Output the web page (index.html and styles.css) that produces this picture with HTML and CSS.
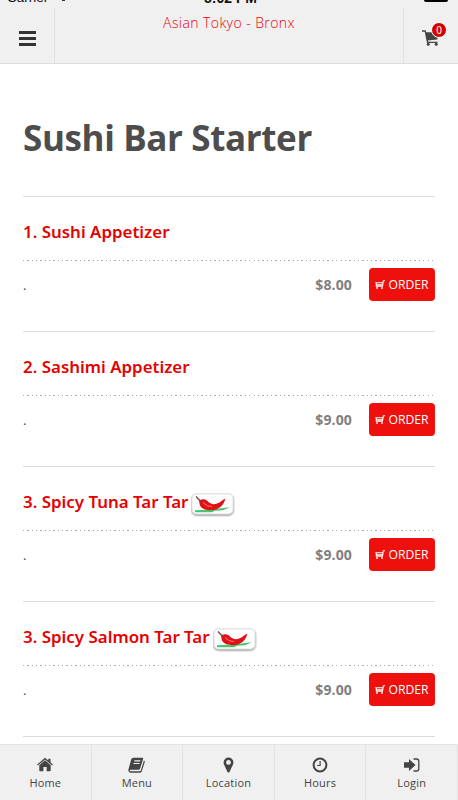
FILE: index.html
```
<!DOCTYPE html>
<html lang="en">
<head>
<meta charset="utf-8">
<title>Asian Tokyo - Bronx</title>
<link rel="stylesheet" href="styles.css">
</head>
<body>
<svg class="defs" aria-hidden="true">
  <symbol id="cart" viewBox="0 0 18 16"><path d="M0 .3h3.600l.7 1.900H17l-1.700 7.300-9.400 1 .3 1.200h9.300v1.200H5L2.700 1.700H0z"/><circle cx="6.200" cy="14.200" r="1.500"/><circle cx="14.200" cy="14.200" r="1.500"/></symbol>
  <symbol id="minicart" viewBox="0 0 10 9"><path fill="none" stroke="currentColor" stroke-width="1.100" d="M10 .8H8.300L7.500 6.300H1.300V2.700M8 2.700H.3M1.500 4.900h6"/><circle cx="2" cy="8" r=".9"/><circle cx="7" cy="8" r=".9"/></symbol>
  <symbol id="chili" viewBox="0 0 44 24">
    <rect class="chili-card" x="1" y="1" width="41" height="20" rx="4.500"/>
    <path fill="#45c56c" d="M4 17.300l13-.5 22-2.600-7 3.100-8 .5-3 1.400H4z"/>
    <path fill="#e01218" d="M8 8.200C9 5.800 14 5.500 16.500 8c3 3 5.500 3.800 9.500 2.600C30 9.500 31 6.800 34.300 5.800 33.500 10 31 14 25.500 16.200 19 18.300 11 17 9 12.500z"/>
    <path fill="none" stroke="#7b4b46" stroke-width="1.400" d="M5 3.500l4.500 4.800"/>
    <path fill="none" stroke="#fa7775" stroke-width="1" d="M12 9.500q4 4.500 9 4"/>
  </symbol>
</svg>
<header class="top">
  <div class="status"><span class="carrier">Carrier</span><i class="wifi"></i><span class="clock">5:02 PM</span><i class="battery"></i></div>
  <div class="bar">
    <a class="side left"><span class="burger"><i></i><i></i><i></i></span></a>
    <span class="brand">Asian Tokyo - Bronx</span>
    <a class="side right"><span class="cart"><svg width="18" height="16"><use href="#cart"/></svg><b class="badge">0</b></span></a>
  </div>
</header>
<main>
  <h1>Sushi Bar Starter</h1>
  <section class="item"><h2>1. Sushi Appetizer</h2><div class="row"><span class="desc">.</span><b class="price">$8.00</b><a class="order"><svg width="10" height="9"><use href="#minicart"/></svg>ORDER</a></div></section>
  <section class="item"><h2>2. Sashimi Appetizer</h2><div class="row"><span class="desc">.</span><b class="price">$9.00</b><a class="order"><svg width="10" height="9"><use href="#minicart"/></svg>ORDER</a></div></section>
  <section class="item"><h2>3. Spicy Tuna Tar Tar<svg class="chili" width="44" height="24"><use href="#chili"/></svg></h2><div class="row"><span class="desc">.</span><b class="price">$9.00</b><a class="order"><svg width="10" height="9"><use href="#minicart"/></svg>ORDER</a></div></section>
  <section class="item"><h2>3. Spicy Salmon Tar Tar<svg class="chili" width="44" height="24"><use href="#chili"/></svg></h2><div class="row"><span class="desc">.</span><b class="price">$9.00</b><a class="order"><svg width="10" height="9"><use href="#minicart"/></svg>ORDER</a></div></section>
  <section class="item"></section>
</main>
<nav class="tabs">
  <a><svg width="16" height="16" viewBox="0 0 16 16"><path d="M8 3.300l5.700 4.900v5.200q0 .8-.8.8H9.600V10H6.400v4.200H3.100q-.8 0-.8-.8V8.200z"/><path d="M8 .8l3.300 2.800V1.700h2.200v3.800l2.400 2.100-.8.9L8 2.500.9 8.500l-.8-.9z"/></svg>Home</a>
  <a><svg width="18" height="16" viewBox="0 0 18 16"><path fill-rule="evenodd" d="M5.300.7h9q1.200 0 .8 1.300l-3 9.500q-.4 1.300-1.700 1.300H2.700q-1 0-1 .7t1 .7h9q.8 0 1.100-.8l3.100-9.800q1.200.4.800 1.700l-2.900 8.900q-.5 1.500-2 1.500H2.600Q0 15.500.4 12.600L3.200 2.500Q3.700.7 5.300.7zM6.500 3.300l-.4 1.100h6l.4-1.100zM5.700 5.900 5.300 7h6l.4-1.100z"/></svg>Menu</a>
  <a><svg width="11" height="16" viewBox="0 0 11 16"><path fill-rule="evenodd" d="M5.500.5a4.900 4.900 0 0 1 4.900 4.900q0 1.200-.5 2.300L6.500 15q-.3.600-1 .6t-1-.6L1.100 7.700Q.6 6.600.6 5.400A4.900 4.900 0 0 1 5.500.5zm0 2.500a2.400 2.400 0 1 0 0 4.800 2.400 2.400 0 0 0 0-4.800z"/></svg>Location</a>
  <a><svg width="16" height="16" viewBox="0 0 16 16"><circle cx="8" cy="8" r="6.400" fill="none" stroke="currentColor" stroke-width="2"/><path d="M7.500 4h1.200v5.100H5V7.900h2.500z"/></svg>Hours</a>
  <a><svg width="16" height="16" viewBox="0 0 16 16"><path d="M0 5.200h5V2l6.500 6L5 14v-3.200H0z"/><path fill="none" stroke="currentColor" stroke-width="1.300" d="M9.500 2h3q2.300 0 2.300 2.300v7.400q0 2.300-2.300 2.300h-3"/></svg>Login</a>
</nav>
</body>
</html>
```

FILE: styles.css
```
* { box-sizing: border-box; }
body {
  margin: 0;
  height: 800px;
  overflow: hidden;
  display: flex;
  flex-direction: column;
  font-family: "Noto Sans", "Open Sans", sans-serif;
  color: #4d4d4d;
  background: #fff;
}
svg { fill: currentColor; display: block; flex: none; }
.defs { position: absolute; width: 0; height: 0; }
.top { height: 64px; flex: none; background: #f0f0f0; border-bottom: 1px solid #dedede; }
.status {
  height: 8px;
  overflow: hidden;
  display: grid;
  grid-template-columns: 55px 10px 1fr 24px;
  padding: 0 10px 0 7px;
  color: #111;
  font: 13.5px/16px "Liberation Sans", sans-serif;
}
.carrier, .clock { margin-top: -10px; }
.clock { font-weight: bold; font-size: 14px; padding-left: 132px; }
.wifi { width: 3px; height: 1px; background: #333; justify-self: start; }
.battery { height: 2px; background: #000; border-radius: 0 0 2px 2px; }
.bar { display: flex; height: 55px; }
.side { width: 55px; display: flex; align-items: center; justify-content: center; color: #444; padding-top: 5px; }
.left { border-right: 1px solid #e2e2e2; }
.right { border-left: 1px solid #e2e2e2; }
.burger { display: grid; gap: 3px; width: 17px; }
.burger i { height: 3px; background: #333; }
.brand { flex: 1; text-align: center; color: #ec0006; font: 300 14px/20px "Open Sans", sans-serif; letter-spacing: .42px; padding-top: 5px; }
.cart { position: relative; }
.badge {
  position: absolute; left: 9px; top: -8px;
  width: 16px; height: 16px;
  border: 1px solid #fff; border-radius: 50%;
  background: #d40000; color: #fff;
  font-size: 10px; font-weight: 400; line-height: 14px; text-align: center;
}
main { flex: 1; min-height: 0; overflow: hidden; padding: 0 23px; }
h1 { margin: 0; height: 132px; padding-top: 49px; font: 700 35px/50px "Open Sans", sans-serif; letter-spacing: -.38px; color: #4d4d4d; white-space: nowrap; }
.item { height: 135px; border-top: 1px solid #dcdcdc; }
h2 { margin: 0; height: 63px; padding-top: 6px; display: flex; align-items: center; font-size: 16.900px; line-height: 24px; font-weight: 600; color: #e60000; white-space: nowrap; }
.chili { margin: 6px 0 0 3px; }
.chili-card { fill: #fff; stroke: #e2e2e2; filter: drop-shadow(0 1px 1px #888); }
.row {
  display: flex; align-items: center; height: 41px; padding-top: 8px;
  background: repeating-linear-gradient(90deg, #aaa 0 1.300px, transparent 1.300px 4.350px) top / 100% 1px no-repeat;
}
.desc { flex: 1; font-size: 13px; }
.price { color: #808080; font: 700 14px "Open Sans", sans-serif; letter-spacing: .15px; margin-right: 17px; }
.order { display: flex; align-items: center; justify-content: center; gap: 3px; width: 66px; height: 33px; border-radius: 4px; background: #ed100c; color: #fff; font: 12.200px "Open Sans", sans-serif; }
.tabs { height: 56px; flex: none; display: grid; grid-template-columns: repeat(5, 1fr); background: #f0f0f0; border-top: 1px solid #e3e3e3; }
.tabs a { display: flex; flex-direction: column; align-items: center; padding-top: 12px; gap: 1px; border-right: 1px solid #e3e3e3; font: 11px/18px "Open Sans", sans-serif; letter-spacing: .18px; color: #444; }
```
